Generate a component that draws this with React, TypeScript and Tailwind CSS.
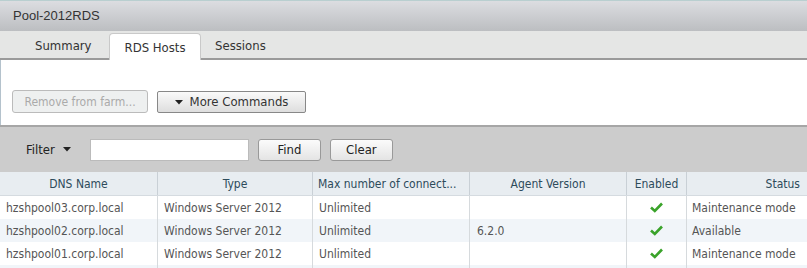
import React from "react";

const font = { fontFamily: '"DejaVu Sans Condensed", "DejaVu Sans", sans-serif' };

function Check() {
  return (
    <svg width="13" height="11" viewBox="0 0 13 11">
      <path d="M1 5.5 L4.8 9 L12 1.5" fill="none" stroke="#3aa32a" strokeWidth="2.6" strokeLinejoin="miter" />
    </svg>
  );
}

function Tri() {
  return (
    <svg width="8" height="5" viewBox="0 0 8 5" className="inline-block">
      <path d="M0 0 L8 0 L4 4.5 Z" fill="#222" />
    </svg>
  );
}

const rows = [
  ["hzshpool03.corp.local", "Windows Server 2012", "Unlimited", "", "Maintenance mode"],
  ["hzshpool02.corp.local", "Windows Server 2012", "Unlimited", "6.2.0", "Available"],
  ["hzshpool01.corp.local", "Windows Server 2012", "Unlimited", "", "Maintenance mode"],
];

const cols = "grid grid-cols-[158px_155px_157px_157px_60px_1fr]";

export default function App() {
  return (
    <div className="w-[807px] h-[268px] overflow-hidden bg-white text-[12px]" style={font}>
      <div className="h-[1px] bg-[#b9cfd0]" />
      <div className="h-[30px] bg-gradient-to-b from-[#dcdde1] to-[#bcbec1] flex items-center pl-[13px] text-[#333] text-[13px] font-['Liberation_Sans',sans-serif]">
        Pool-2012RDS
      </div>
      <div className="h-[29px] bg-[#e5e6e5] border-b-2 border-[#9a9a9a] flex items-end pl-[12px] text-[13px] text-[#333]">
        <div className="h-[25px] w-[97px] pl-[23px] flex items-center">Summary</div>
        <div className="w-[92px] flex items-center justify-center bg-white rounded-t-[4px] border border-b-0 border-[#c9c9c9] -mb-[2px] h-[27px] pt-[1px]">RDS Hosts</div>
        <div className="h-[25px] pl-[14px] flex items-center">Sessions</div>
      </div>
      <div className="h-[65px] border-l border-[#b4c2cc] flex items-end pb-[12px] pl-[11px] gap-[9px]">
        <div className="h-[23px] w-[136px] border border-[#bbb] rounded-[3px] bg-[#eef0f0] text-[#aaa] flex items-center justify-center text-[12px]">Remove from farm...</div>
        <div className="h-[22px] w-[149px] border border-[#888] rounded-[2px] bg-gradient-to-b from-[#fafafa] to-[#dedede] text-[#333] flex items-center justify-center gap-[7px] text-[13px]">
          <Tri /> More Commands
        </div>
      </div>
      <div className="h-[47px] bg-[#cccccc] border-t-2 border-[#a6a6a6] flex items-center pl-[26px] text-[13px] text-[#222]">
        <span>Filter</span>
        <span className="ml-[8px] mr-[19px] flex"><Tri /></span>
        <div className="w-[159px] h-[22px] bg-white border border-[#bbb]" />
        <div className="ml-[9px] w-[63px] h-[22px] rounded-[3px] border border-[#999] bg-gradient-to-b from-[#fbfbfb] to-[#e4e4e4] flex items-center justify-center">Find</div>
        <div className="ml-[9px] w-[63px] h-[22px] rounded-[3px] border border-[#999] bg-gradient-to-b from-[#fbfbfb] to-[#e4e4e4] flex items-center justify-center">Clear</div>
      </div>
      <div className={`${cols} h-[24px] bg-[#e8edf1] text-[#2d4b5b] border-b border-[#d5dbe0]`}>
        <div className="flex items-center justify-center border-r border-[#c9d0d6]">DNS Name</div>
        <div className="flex items-center justify-center border-r border-[#c9d0d6]">Type</div>
        <div className="flex items-center pl-[5px] border-r border-[#c9d0d6] whitespace-nowrap overflow-hidden">Max number of connect...</div>
        <div className="flex items-center justify-center border-r border-[#c9d0d6]">Agent Version</div>
        <div className="flex items-center justify-center border-r border-[#c9d0d6]">Enabled</div>
        <div className="flex items-center justify-end pr-[7px]">Status</div>
      </div>
      {[...rows, ["", "", "", "", ""]].map((r, i) => (
        <div key={i} className={`${cols} h-[23px] text-[#555] ${i % 2 === 1 ? "bg-[#f1f5f9]" : "bg-white"}`}>
          <div className="flex items-center pl-[6px] border-r border-[#d6dadd]">{r[0]}</div>
          <div className="flex items-center pl-[6px] border-r border-[#d6dadd]">{r[1]}</div>
          <div className="flex items-center pl-[6px] border-r border-[#d6dadd]">{r[2]}</div>
          <div className="flex items-center pl-[7px] border-r border-[#d6dadd]">{r[3]}</div>
          <div className="flex items-center justify-center border-r border-[#d6dadd]">{i < 3 ? <Check /> : null}</div>
          <div className="flex items-center pl-[5px]">{r[4]}</div>
        </div>
      ))}
    </div>
  );
}
